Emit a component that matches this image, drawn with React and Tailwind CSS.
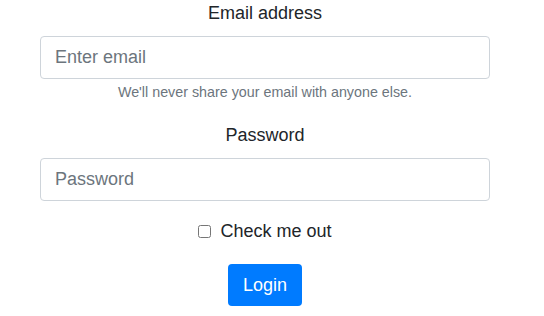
export default function App() {
  return (
    <div className="w-[544px] h-[316px] bg-white text-[#212529] font-['Liberation_Sans',Arial,sans-serif]">
      <form className="ml-[40px] w-[450px] flex flex-col items-center">
        {/* Email */}
        <label className="text-[18px] leading-[27px] mb-[9px]">Email address</label>
        <input
          type="email"
          placeholder="Enter email"
          className="w-full h-[43px] px-[14px] text-[18px] border border-[#ced4da] rounded-[4px] placeholder:text-[#6c757d] outline-none"
        />
        <small className="mt-[3px] text-[14.3px] leading-[21px] text-[#6c757d]">
          We'll never share your email with anyone else.
        </small>

        {/* Password */}
        <label className="mt-[19px] text-[18px] leading-[27px] mb-[9px]">Password</label>
        <input
          type="password"
          placeholder="Password"
          className="w-full h-[43px] px-[14px] text-[18px] border border-[#ced4da] rounded-[4px] placeholder:text-[#6c757d] outline-none"
        />

        {/* Checkbox */}
        <div className="mt-[17px] flex items-center h-[27px]">
          <input type="checkbox" className="w-[13px] h-[13px] mr-[9px]" />
          <span className="text-[18px] leading-[27px]">Check me out</span>
        </div>

        <button
          type="button"
          className="mt-[19px] h-[42px] px-[15px] rounded-[4px] bg-[#007bff] text-white text-[18px]"
        >
          Login
        </button>
      </form>
    </div>
  );
}
